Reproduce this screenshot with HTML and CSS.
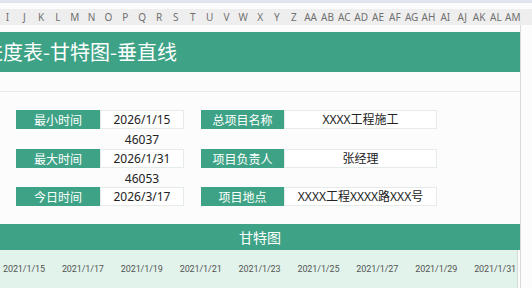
FILE: index.html
```html
<!DOCTYPE html>
<html lang="zh-CN">
<head>
    <meta charset="UTF-8">
    <meta name="viewport" content="width=device-width, initial-scale=1.0">
    <title>甘特进度表-甘特图-垂直线</title>
    <link rel="stylesheet" href="styles.css">
</head>
<body>
    <div class="top-strip"></div>
    <div class="col-header">
        <span>I</span><span>J</span><span>K</span><span>L</span><span>M</span><span>N</span>
        <span>O</span><span>P</span><span>Q</span><span>R</span><span>S</span><span>T</span>
        <span>U</span><span>V</span><span>W</span><span>X</span><span>Y</span><span>Z</span>
        <span>AA</span><span>AB</span><span>AC</span><span>AD</span><span>AE</span><span>AF</span>
        <span>AG</span><span>AH</span><span>AI</span><span>AJ</span><span>AK</span><span>AL</span>
        <span>AM</span>
    </div>

    <div class="sheet">
        <div class="main">
            <div class="title-bar">
                <h1>进度表-甘特图-垂直线</h1>
            </div>

            <div class="panel">
                <div class="info-grid">
                    <div class="label">最小时间</div>
                    <div class="value">2026/1/15</div>
                    <div></div>
                    <div class="label">总项目名称</div>
                    <div class="value">XXXX工程施工</div>

                    <div></div>
                    <div class="plain">46037</div>
                    <div></div><div></div><div></div>

                    <div class="label">最大时间</div>
                    <div class="value">2026/1/31</div>
                    <div></div>
                    <div class="label">项目负责人</div>
                    <div class="value">张经理</div>

                    <div></div>
                    <div class="plain">46053</div>
                    <div></div><div></div><div></div>

                    <div class="label">今日时间</div>
                    <div class="value">2026/3/17</div>
                    <div></div>
                    <div class="label">项目地点</div>
                    <div class="value">XXXX工程XXXX路XXX号</div>
                </div>
            </div>

            <div class="gantt-header">甘特图</div>
            <div class="gantt-axis">
                <span>2021/1/15</span>
                <span>2021/1/17</span>
                <span>2021/1/19</span>
                <span>2021/1/21</span>
                <span>2021/1/23</span>
                <span>2021/1/25</span>
                <span>2021/1/27</span>
                <span>2021/1/29</span>
                <span>2021/1/31</span>
            </div>
        </div>
        <div class="edge"></div>
    </div>
</body>
</html>
```

FILE: styles.css
```css
body {
    margin: 0;
    background-color: #fcfcfd;
    font-family: "Noto Sans", "Noto Sans CJK SC", sans-serif;
    color: #222;
    overflow: hidden;
}

.top-strip {
    height: 3px;
    background-color: #dfe5ec;
    margin-bottom: 6px;
}

.col-header {
    display: flex;
    height: 16px;
    background-color: #eeeeee;
    margin-left: -1px;
    white-space: nowrap;
    overflow: hidden;
}

.col-header span {
    flex: 0 0 16.85px;
    text-align: center;
    font-size: 10px;
    line-height: 16px;
    color: #707070;
}

.sheet {
    display: flex;
}

.main {
    width: 520px;
    padding-top: 7px;
}

.edge {
    flex: 1;
    border-left: 1px solid #d9dadc;
}

.title-bar {
    height: 40px;
    background-color: #3ea386;
    overflow: hidden;
}

.title-bar h1 {
    margin: 0 0 0 -17px;
    font-size: 20px;
    font-weight: normal;
    line-height: 40px;
    color: #fff;
    white-space: nowrap;
    font-family: "Noto Sans CJK SC", sans-serif;
}

.panel {
    margin-top: 19px;
    height: 126px;
    border-top: 1px solid #e6e8ea;
    padding: 18px 0 0 16px;
    box-sizing: border-box;
}

.info-grid {
    display: grid;
    grid-template-columns: 84px 84px 17px 83px 153px;
    grid-auto-rows: 19.25px;
    font-size: 12px;
}

.label {
    background-color: #3ea386;
    color: #fff;
    text-align: center;
    line-height: 19px;
    height: 19px;
    font-family: "Noto Sans CJK SC", sans-serif;
}

.value {
    background-color: #fff;
    border: 1px solid #e4ebe8;
    text-align: center;
    line-height: 17px;
    height: 19px;
    box-sizing: border-box;
    font-family: "Noto Sans", "Noto Sans CJK SC", sans-serif;
}

.plain {
    text-align: center;
    line-height: 21px;
}

.gantt-header {
    margin-top: 7px;
    height: 26px;
    background-color: #3ea386;
    color: #fff;
    text-align: center;
    font-size: 14px;
    line-height: 26px;
    font-family: "Noto Sans CJK SC", sans-serif;
}

.gantt-axis {
    display: flex;
    height: 40px;
    background-color: #e1f3eb;
    padding-left: 3px;
    border-right: 1px solid #d4dcd8;
    margin-right: 2px;
}

.gantt-axis span {
    flex: 0 0 58.9px;
    font-family: Roboto, sans-serif;
    font-size: 9px;
    letter-spacing: -0.1px;
    line-height: 38px;
    color: #555;
    white-space: nowrap;
}
```
